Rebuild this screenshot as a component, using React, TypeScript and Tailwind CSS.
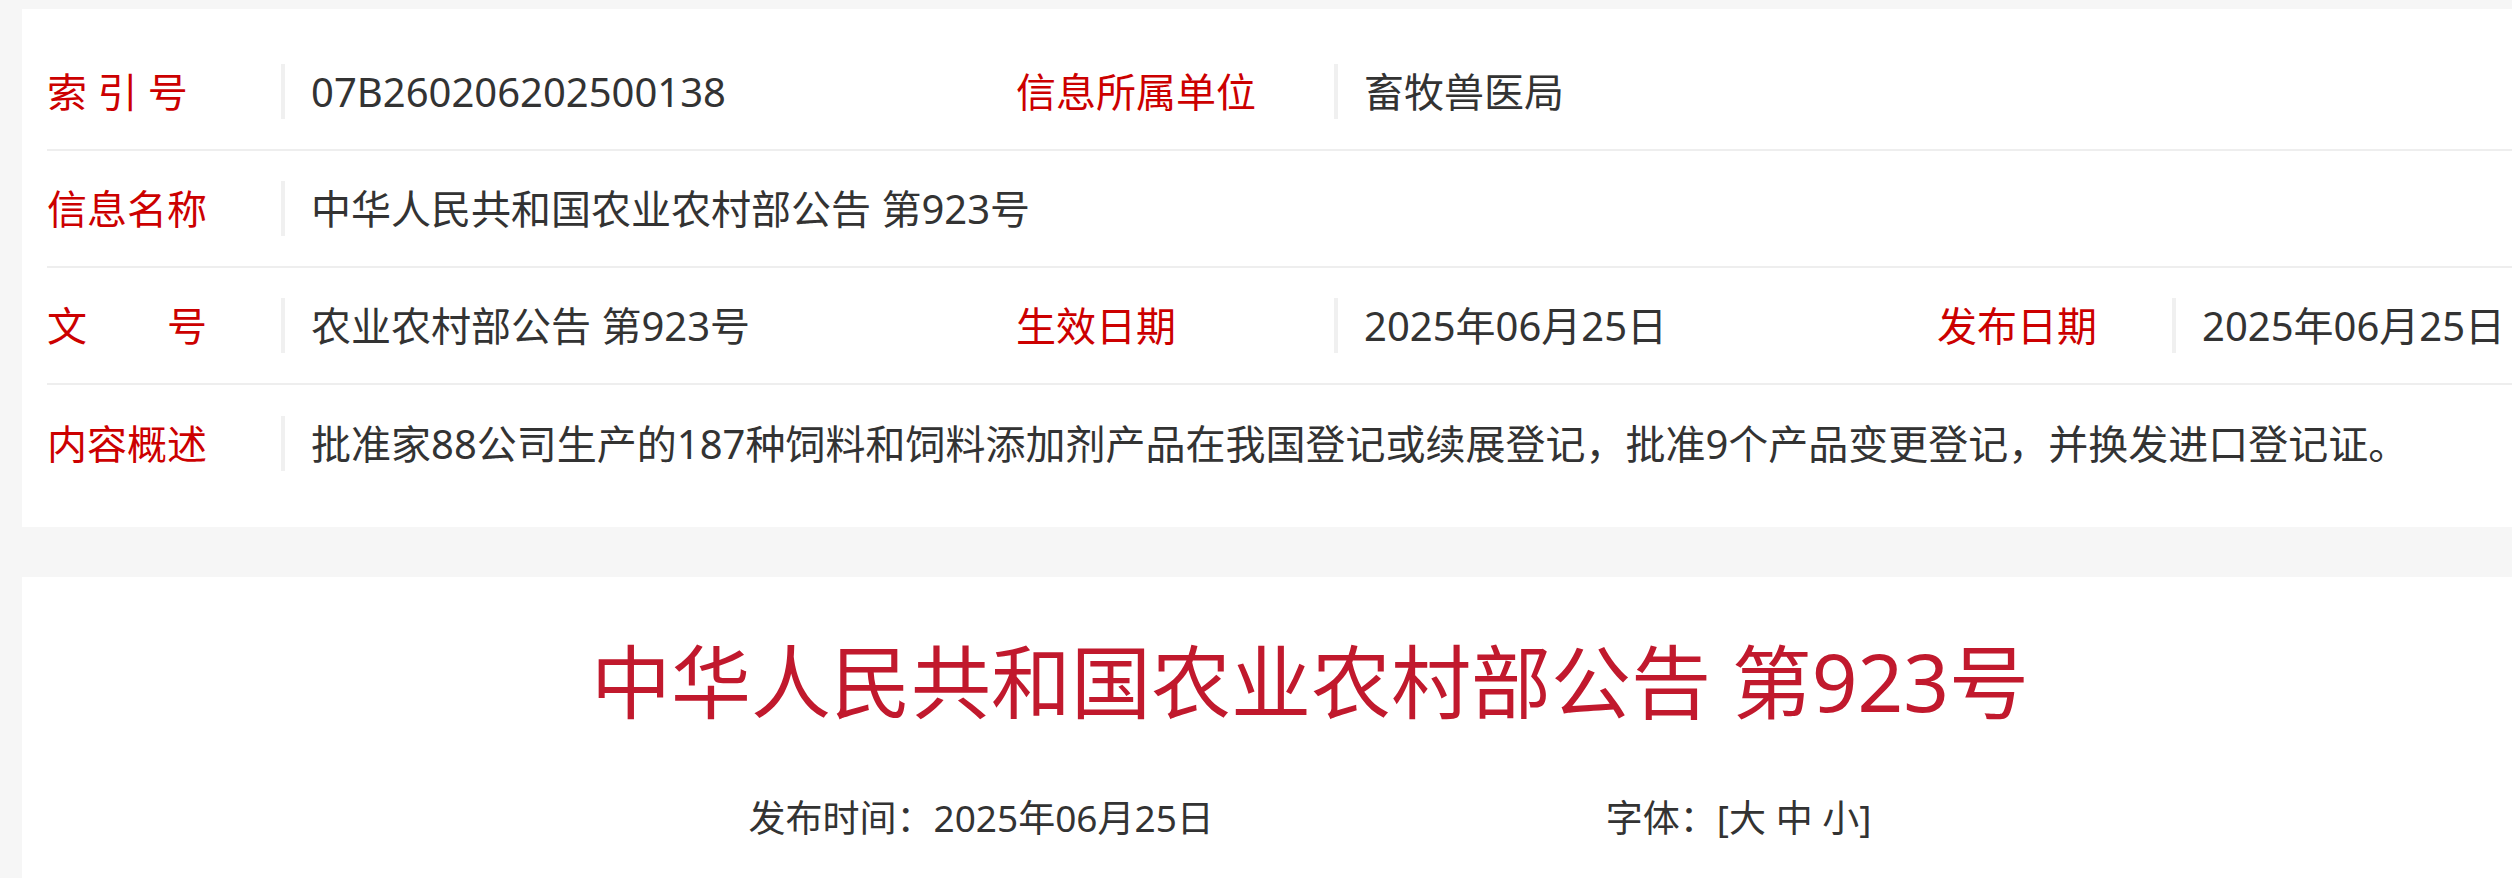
const FONT = { fontFamily: '"Noto Sans", "Noto Sans CJK SC", sans-serif' };

function Label({ children }: { children: React.ReactNode }) {
  return <div className="whitespace-pre text-[40px] leading-none text-[#cc0000]">{children}</div>;
}

function Value({ children, span }: { children: React.ReactNode; span?: boolean }) {
  return (
    <div className={`flex items-center ${span ? "col-span-5" : ""}`}>
      <div className="h-[55px] w-[4px] shrink-0 bg-[#f0f0f0]" />
      <div className="ml-[26px] whitespace-nowrap text-[40px] leading-none text-[#333]">{children}</div>
    </div>
  );
}

const rowCls =
  "grid h-[117px] grid-cols-[234px_735px_318px_603px_235px_1fr] items-center";

export default function App() {
  return (
    <div className="min-h-[878px] w-full overflow-hidden bg-[#f6f6f6]" style={FONT}>
      <div className="w-[2620px] px-[22px] pt-[9px]">
        {/* info table */}
        <div className="bg-white p-[25px]">
          <div className={`${rowCls} border-b-2 border-[#eeeeee]`}>
            <Label>索 引 号</Label>
            <Value>07B260206202500138</Value>
            <Label>信息所属单位</Label>
            <Value>畜牧兽医局</Value>
          </div>
          <div className={`${rowCls} border-b-2 border-[#eeeeee]`}>
            <Label>信息名称</Label>
            <Value span>中华人民共和国农业农村部公告 第923号</Value>
          </div>
          <div className={`${rowCls} border-b-2 border-[#eeeeee]`}>
            <Label>文　　号</Label>
            <Value>农业农村部公告 第923号</Value>
            <Label>生效日期</Label>
            <Value>2025年06月25日</Value>
            <Label>发布日期</Label>
            <Value>2025年06月25日</Value>
          </div>
          <div className={`${rowCls} h-[115px]`}>
            <Label>内容概述</Label>
            <Value span>
              批准家88公司生产的187种饲料和饲料添加剂产品在我国登记或续展登记，批准9个产品变更登记，并换发进口登记证。
            </Value>
          </div>
        </div>

        {/* article */}
        <div className="mt-[50px] bg-white pb-[60px] pt-[56px]">
          <h1 className="text-center text-[80px] font-normal leading-[96px] text-[#c1192d]">
            中华人民共和国农业农村部公告 第923号
          </h1>
          <div className="mt-[62px] flex justify-center gap-[392px] text-[37px] leading-[54px] text-[#333]">
            <span>发布时间：2025年06月25日</span>
            <span>字体：[大 中 小]</span>
          </div>
        </div>
      </div>
    </div>
  );
}
